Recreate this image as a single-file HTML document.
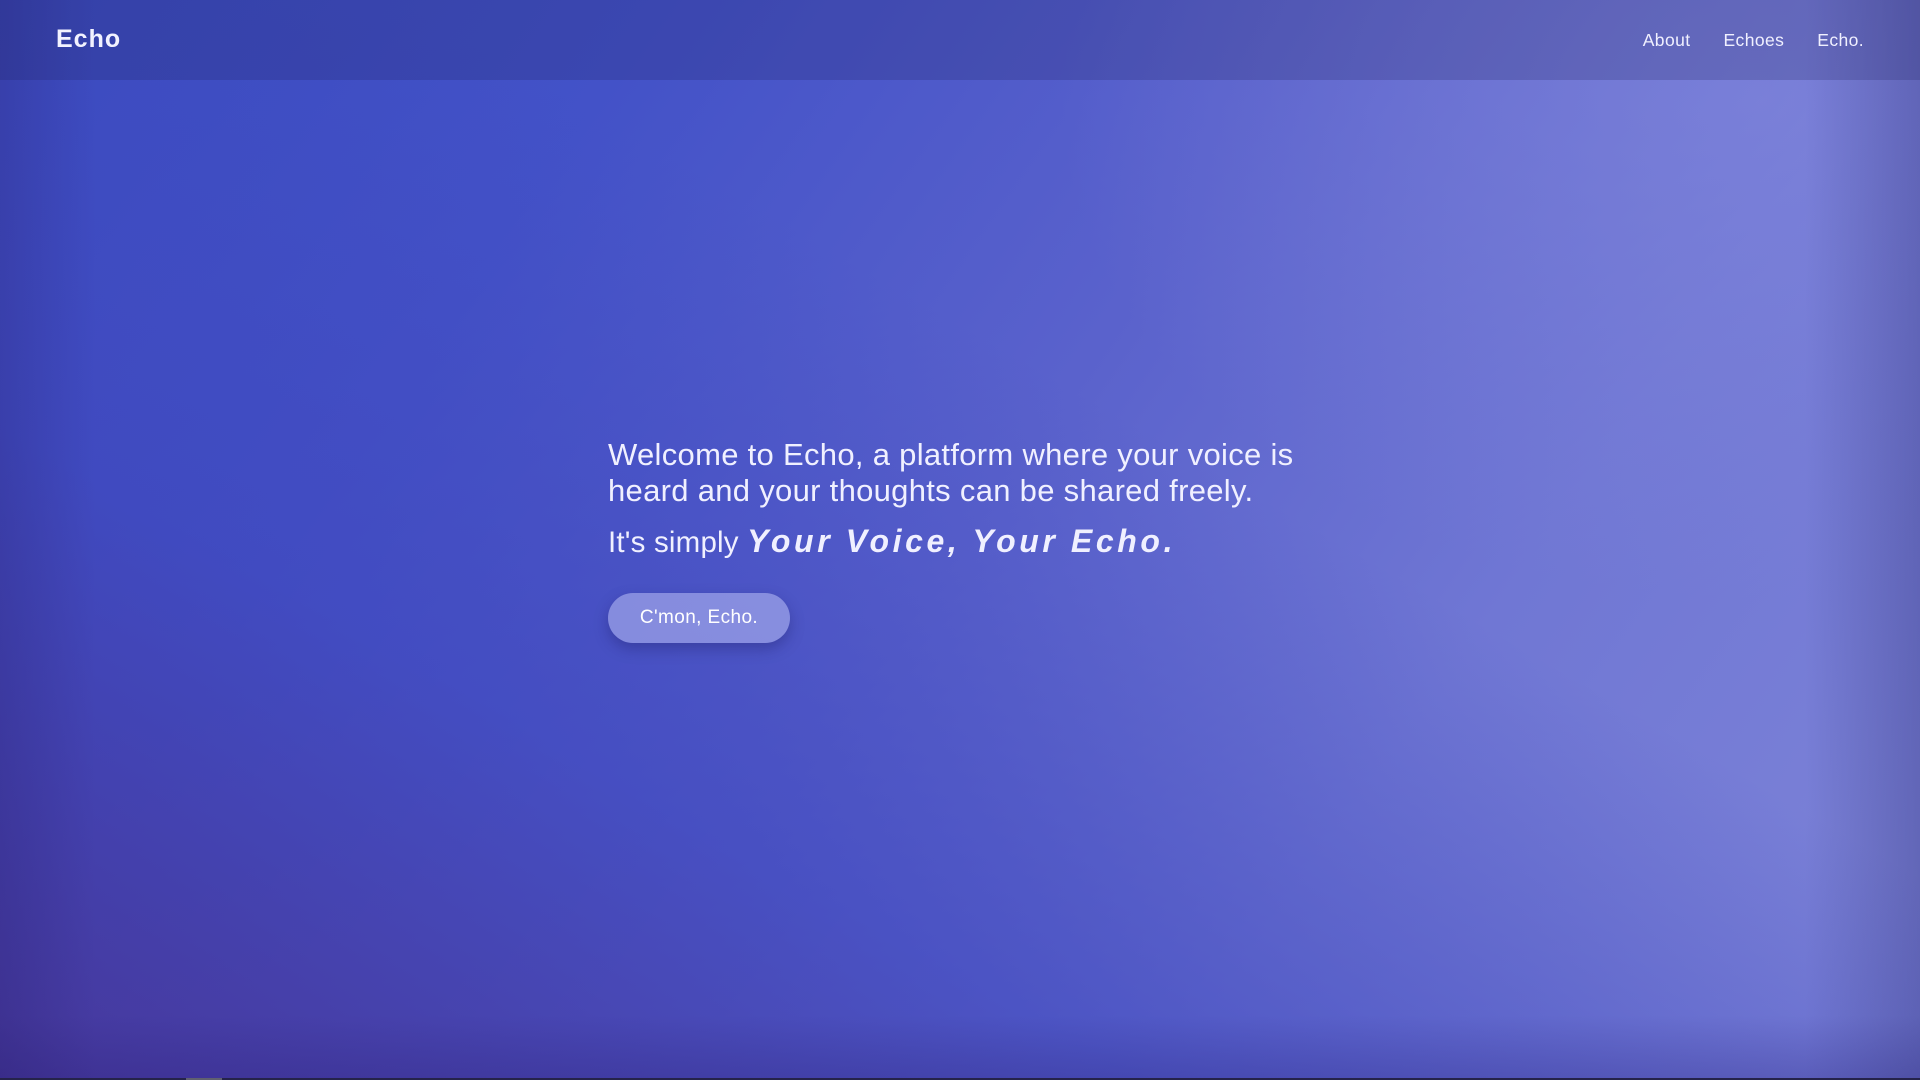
<!DOCTYPE html>
<html><head><meta charset="utf-8"><style>
html,body{margin:0;padding:0;width:1920px;height:1080px;overflow:hidden;font-family:"Liberation Sans",sans-serif;}
body{position:relative;background:linear-gradient(125deg,#3a4cc0 0%,#4352c8 25%,#5a62cc 50%,#7077d4 72%,#7e84d8 100%);}
.bg2{position:absolute;inset:0;background:linear-gradient(30deg,rgba(70,52,150,0.9) 0%,rgba(64,72,190,0.7) 30%,rgba(80,90,200,0) 60%);}
.bg3{position:absolute;inset:0;background:radial-gradient(ellipse 700px 500px at 1760px 100px,rgba(130,135,220,0.6),rgba(130,135,220,0));}
.vig{position:absolute;inset:0;background:linear-gradient(90deg,rgba(40,30,110,0.25) 0%,rgba(40,30,110,0) 5%,rgba(40,30,110,0) 94%,rgba(40,40,110,0.3) 100%),linear-gradient(0deg,rgba(40,30,120,0.25) 0%,rgba(40,30,120,0) 6%);}
header{position:absolute;left:0;top:0;width:1920px;height:80px;background:rgba(30,30,90,0.22);}
.logo{position:absolute;left:56px;top:25px;font-size:25px;font-weight:bold;color:#f2f2ff;letter-spacing:1px;}
nav{position:absolute;right:56px;top:30px;font-size:17.5px;color:#f0f0ff;letter-spacing:0.4px;}
nav span{margin-left:33px;}
.hero{position:absolute;left:608px;top:437px;color:#f0f0ff;}
.h1{font-size:31px;line-height:36px;width:760px;letter-spacing:0.3px;}
.h2{font-size:29.5px;margin-top:14px;letter-spacing:0.2px;}
.h2 b{font-style:italic;font-size:32px;letter-spacing:3.6px;}
.btn{position:absolute;left:608px;top:593px;width:182px;height:50px;border-radius:25px;background:rgba(175,180,240,0.6);color:#fff;font-size:19px;letter-spacing:0.4px;text-align:center;line-height:50px;box-shadow:0 6px 14px rgba(30,30,100,0.35);}
.bar{position:absolute;left:0;bottom:0;width:1920px;height:2px;background:#25234a;}
.bar i{position:absolute;left:186px;width:36px;height:2px;background:#606070;}
</style></head><body>
<div class="bg2"></div><div class="bg3"></div><div class="vig"></div>
<header><div class="logo">Echo</div><nav><span>About</span><span>Echoes</span><span>Echo.</span></nav></header>
<div class="hero"><div class="h1">Welcome to Echo, a platform where your voice is heard and your thoughts can be shared freely.</div>
<div class="h2">It's simply <b>Your Voice, Your Echo.</b></div></div>
<div class="btn">C'mon, Echo.</div>
<div class="bar"><i></i></div>
</body></html>
